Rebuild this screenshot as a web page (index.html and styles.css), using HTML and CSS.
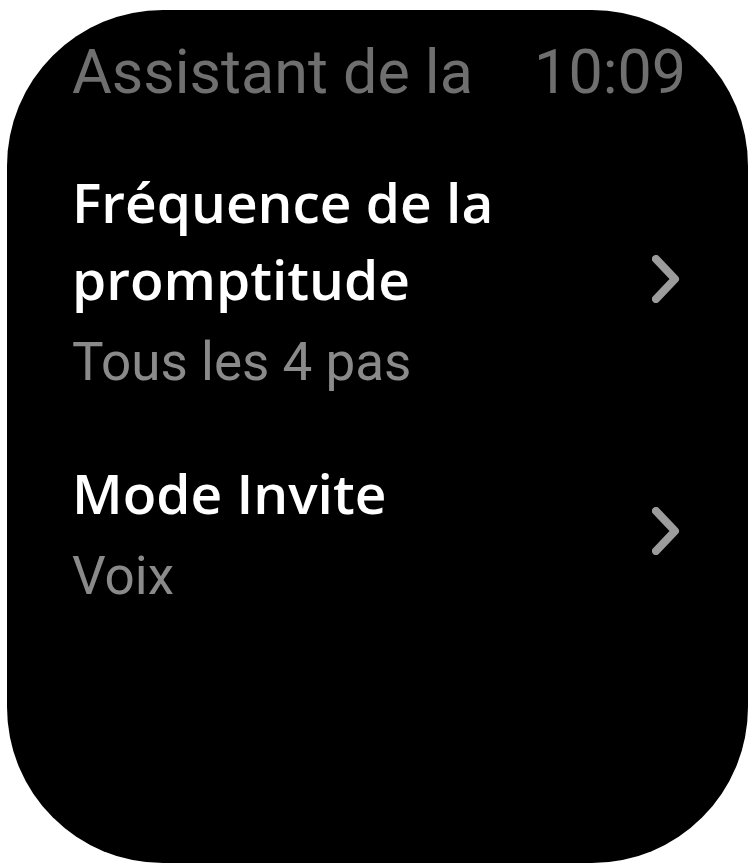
FILE: index.html
```html
<!DOCTYPE html>
<html lang="fr">
<head>
    <meta charset="UTF-8">
    <meta name="viewport" content="width=device-width, initial-scale=1.0">
    <title>Assistant de la course</title>
    <link rel="stylesheet" href="styles.css">
</head>
<body>
    <div class="screen">
        <header class="status-bar">
            <span class="title">Assistant de la</span>
            <span class="clock">10:09</span>
        </header>

        <div class="settings">
            <div class="setting">
                <div class="setting-text">
                    <div class="setting-name">Fréquence de la promptitude</div>
                    <div class="setting-value">Tous les 4 pas</div>
                </div>
                <svg class="chevron" width="28" height="48" viewBox="0 0 28 48">
                    <path d="M4 4 L23 24 L4 44" />
                </svg>
            </div>

            <div class="setting">
                <div class="setting-text">
                    <div class="setting-name">Mode Invite</div>
                    <div class="setting-value">Voix</div>
                </div>
                <svg class="chevron" width="28" height="48" viewBox="0 0 28 48">
                    <path d="M4 4 L23 24 L4 44" />
                </svg>
            </div>
        </div>
    </div>
</body>
</html>
```

FILE: styles.css
```css
* {
    margin: 0;
    padding: 0;
    box-sizing: border-box;
}

body {
    background-color: #ffffff;
    width: 756px;
    height: 867px;
    overflow: hidden;
}

.screen {
    margin: 10px 0 0 7px;
    width: 741px;
    height: 853px;
    background-color: #000000;
    border-radius: 156px;
    padding: 27px 65px 0 65px;
}

.status-bar {
    display: flex;
    justify-content: space-between;
    margin-right: -3px;
    font-family: Roboto, "Liberation Sans", sans-serif;
    font-size: 61px;
    line-height: 70px;
    color: #6f6f6f;
}

.settings {
    display: flex;
    flex-direction: column;
    gap: 60px;
    margin-top: 56px;
}

.setting {
    display: flex;
    align-items: center;
    justify-content: space-between;
}

.setting-name {
    font-family: "Open Sans", "Noto Sans", sans-serif;
    font-weight: 600;
    font-size: 55px;
    line-height: 77px;
    color: #ffffff;
    max-width: 500px;
}

.setting-value {
    font-family: Roboto, "Liberation Sans", sans-serif;
    font-size: 53px;
    line-height: 64px;
    color: #8a8a8a;
    margin-top: 13px;
}

.chevron {
    flex-shrink: 0;
    margin-right: 3px;
}

.chevron path {
    fill: none;
    stroke: #9c9c9c;
    stroke-width: 8;
    stroke-linecap: round;
    stroke-linejoin: round;
}
```
